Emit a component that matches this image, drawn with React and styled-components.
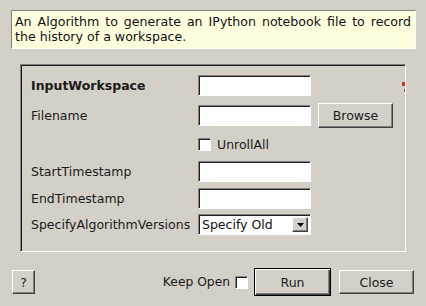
import React from 'react';
import styled, { createGlobalStyle } from 'styled-components';

const GlobalStyle = createGlobalStyle`
  html, body {
    margin: 0;
    padding: 0;
    background: #d4d0c8;
  }
  body {
    font-family: "DejaVu Sans", "Liberation Sans", sans-serif;
    font-size: 12px;
    color: #000;
  }
`;

const Dialog = styled.div`
  width: 426px;
  height: 306px;
  box-sizing: border-box;
  padding: 10px 12px 0 11px;
  background: #d4d0c8;
`;

const Description = styled.div`
  box-sizing: border-box;
  width: 405px;
  height: 39px;
  padding: 3px 4px 0 3px;
  background: #ffffe0;
  border: 1px solid;
  border-color: #808080 #ffffff #ffffff #808080;
  font-size: 12.6px;
  line-height: 15px;
  text-align: justify;
  color: #111;
`;

const Frame = styled.div`
  position: relative;
  box-sizing: border-box;
  width: 386px;
  height: 188px;
  margin: 15px 0 0 9px;
  padding: 10px 0 0 9px;
  border: 1px solid;
  border-color: #808080 #ffffff #ffffff #808080;
  box-shadow: inset 1px 1px 0 #1a1a1a;
  overflow: hidden;
`;

const Form = styled.div`
  display: grid;
  grid-template-columns: 160px 113px 75px;
  grid-template-rows: 21px 26px 20px 23px 19px 21px;
  column-gap: 7px;
  row-gap: 6px;
  align-items: center;
  margin-left: 1px;
`;

const Label = styled.div`
  grid-column: 1;
  font-weight: ${(p) => (p.$bold ? 'bold' : 'normal')};
  color: #1a1a1a;
  white-space: nowrap;
  font-size: 12.5px;
`;

const sunken = `
  border: 1px solid;
  border-color: #808080 #ffffff #ffffff #808080;
  box-shadow: inset 1px 1px 0 #202020;
`;

const TextInput = styled.div`
  grid-column: 2;
  box-sizing: border-box;
  height: 21px;
  background: #fff;
  ${sunken}
`;

const Button = styled.button`
  box-sizing: border-box;
  width: ${(p) => p.$w}px;
  height: ${(p) => p.$h || 25}px;
  padding: 0;
  background: #d4d0c8;
  font-family: inherit;
  font-size: 12.5px;
  color: #1a1a1a;
  border: 1px solid;
  border-color: ${(p) =>
    p.$default ? '#000' : '#ffffff #404040 #404040 #ffffff'};
  box-shadow: ${(p) =>
    p.$default
      ? 'inset 1px 1px 0 #fff, inset -1px -1px 0 #404040, inset -2px -2px 0 #808080'
      : 'inset -1px -1px 0 #808080'};
  cursor: default;
`;

const CheckRow = styled.label`
  grid-column: 2 / span 2;
  display: flex;
  align-items: center;
  gap: 6px;
  color: #1a1a1a;
  font-size: 12.5px;
`;

const Box = styled.span`
  box-sizing: border-box;
  display: inline-block;
  width: 13px;
  height: 13px;
  background: #fff;
  ${sunken}
`;

const Select = styled.div`
  grid-column: 2;
  box-sizing: border-box;
  height: 21px;
  display: flex;
  align-items: center;
  justify-content: space-between;
  padding: 0 2px 0 3px;
  background: #fff;
  ${sunken}
  font-size: 12.5px;
  color: #111;
`;

const ArrowButton = styled.span`
  box-sizing: border-box;
  width: 16px;
  height: 15px;
  display: flex;
  align-items: center;
  justify-content: center;
  background: #d4d0c8;
  border: 1px solid;
  border-color: #ffffff #404040 #404040 #ffffff;
  box-shadow: inset -1px -1px 0 #808080;
`;

const Marker = styled.svg`
  position: absolute;
  top: 16px;
  right: -4px;
`;

const Footer = styled.div`
  display: flex;
  align-items: center;
  height: 28px;
  margin-top: 16px;
  padding-left: 1px;
`;

const Spacer = styled.div`
  flex: 1;
`;

const KeepOpen = styled.label`
  display: flex;
  align-items: center;
  gap: 5px;
  margin-right: 6px;
  color: #1a1a1a;
  font-size: 12.3px;
`;

const CloseWrap = styled.div`
  margin-left: 8px;
`;

export default function App() {
  return (
    <Dialog>
      <GlobalStyle />
      <Description>
        An Algorithm to generate an IPython notebook file to record the history of a workspace.
      </Description>
      <Frame>
        <Form>
          <Label $bold>InputWorkspace</Label>
          <TextInput />
          <div />

          <Label>Filename</Label>
          <TextInput />
          <Button $w={75} $h={25}>Browse</Button>

          <div />
          <CheckRow>
            <Box />
            UnrollAll
          </CheckRow>

          <Label>StartTimestamp</Label>
          <TextInput />
          <div />

          <Label>EndTimestamp</Label>
          <TextInput />
          <div />

          <Label>SpecifyAlgorithmVersions</Label>
          <Select>
            Specify Old
            <ArrowButton>
              <svg width="7" height="4" viewBox="0 0 7 4">
                <path d="M0 0 H7 L3.5 4 Z" fill="#000" />
              </svg>
            </ArrowButton>
          </Select>
          <div />
        </Form>
        <Marker width="8" height="12" viewBox="0 0 8 12">
          <path d="M1 1 L5 1 L5 5 L1 5 Z" fill="#c0392b" />
          <path d="M3 8 L5 8 L5 11 L3 11 Z" fill="#c0392b" />
        </Marker>
      </Frame>
      <Footer>
        <Button $w={23} $h={24}>?</Button>
        <Spacer />
        <KeepOpen>
          Keep Open
          <Box />
        </KeepOpen>
        <Button $w={77} $h={28} $default>Run</Button>
        <CloseWrap>
          <Button $w={75} $h={24}>Close</Button>
        </CloseWrap>
      </Footer>
    </Dialog>
  );
}
